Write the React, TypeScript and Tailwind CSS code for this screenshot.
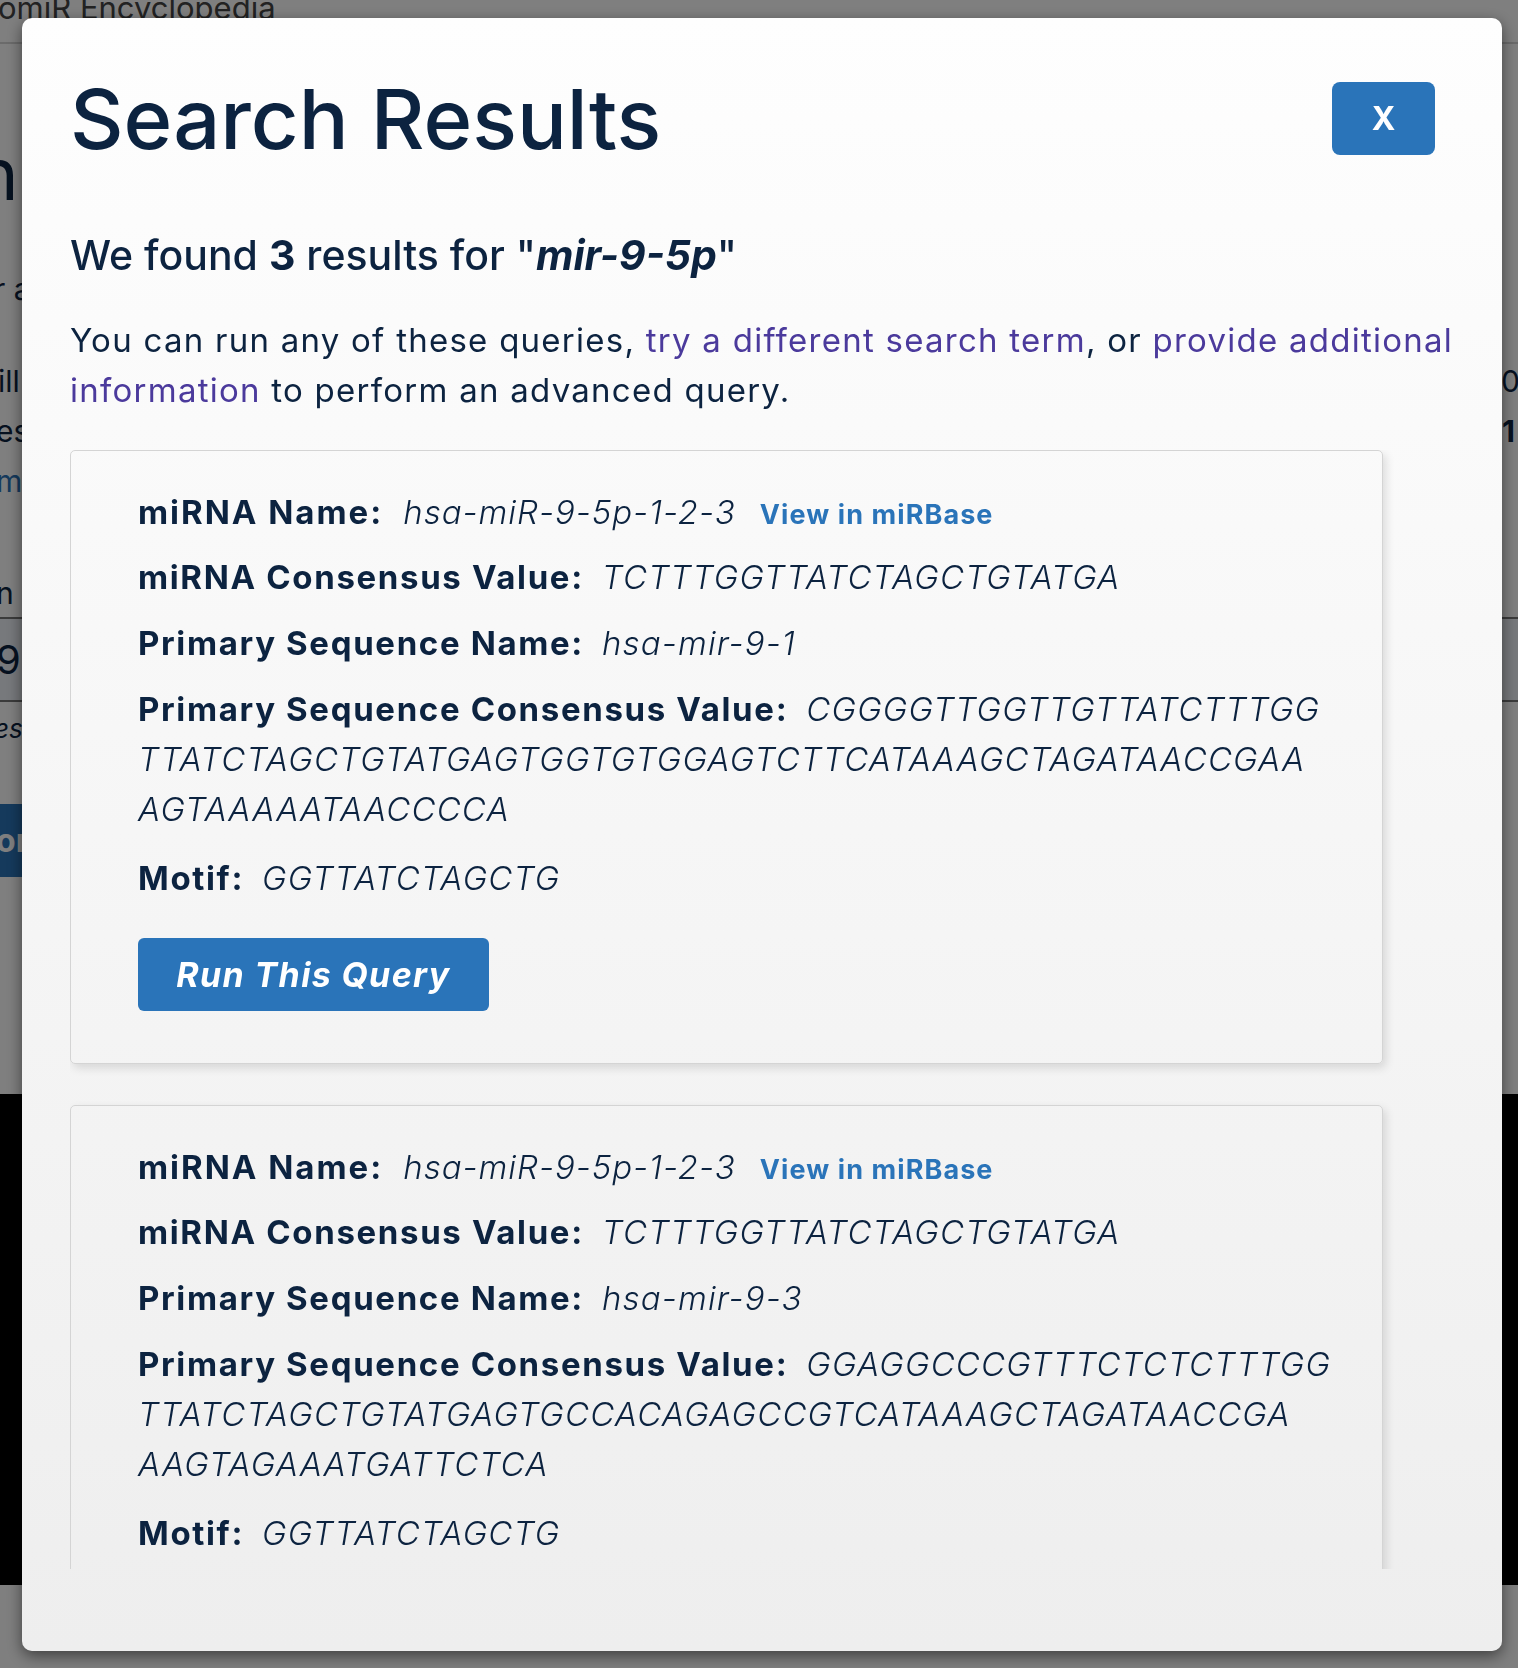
import { Fragment } from "react";

type Result = {
  name: string;
  consensus: string;
  primaryName: string;
  primaryConsensus: string[];
  motif: string;
};

const results: Result[] = [
  {
    name: "hsa-miR-9-5p-1-2-3",
    consensus: "TCTTTGGTTATCTAGCTGTATGA",
    primaryName: "hsa-mir-9-1",
    primaryConsensus: [
      "CGGGGTTGGTTGTTATCTTTGG",
      "TTATCTAGCTGTATGAGTGGTGTGGAGTCTTCATAAAGCTAGATAACCGAA",
      "AGTAAAAATAACCCCA",
    ],
    motif: "GGTTATCTAGCTG",
  },
  {
    name: "hsa-miR-9-5p-1-2-3",
    consensus: "TCTTTGGTTATCTAGCTGTATGA",
    primaryName: "hsa-mir-9-3",
    primaryConsensus: [
      "GGAGGCCCGTTTCTCTCTTTGG",
      "TTATCTAGCTGTATGAGTGCCACAGAGCCGTCATAAAGCTAGATAACCGA",
      "AAGTAGAAATGATTCTCA",
    ],
    motif: "GGTTATCTAGCTG",
  },
  {
    name: "hsa-miR-9-5p-1-2-3",
    consensus: "TCTTTGGTTATCTAGCTGTATGA",
    primaryName: "hsa-mir-9-2",
    primaryConsensus: [
      "GGAAGCGAGTTGTTATCTTTGG",
      "TTATCTAGCTGTATGAGTGTATTGGTCTTCATAAAGCTAGATAACCGAA",
      "AGTAAAAACTCCTTCA",
    ],
    motif: "GGTTATCTAGCTG",
  },
];

function Field({
  label,
  children,
  className = "mb-4",
}: {
  label: string;
  children: React.ReactNode;
  className?: string;
}) {
  return (
    <p className={`${className} whitespace-nowrap text-[33px] leading-[50px]`}>
      <span className="font-bold tracking-[0.05em]">{label}:</span>
      <span className="ml-[18px] italic font-light tracking-[0.035em]">{children}</span>
    </p>
  );
}

function ResultCard({ result }: { result: Result }) {
  return (
    <article className="mb-[41px] w-[1313px] rounded-[5px] border-[1.5px] border-[#d4d4d4] px-[67px] pt-[36px] pb-[52px] shadow-[3px_4px_10px_rgba(0,0,0,0.12)]">
      <p className="mb-[12px] whitespace-nowrap text-[33px] leading-[50px]">
        <span className="font-bold tracking-[0.06em]">miRNA Name:</span>
        <span className="ml-5 italic font-light tracking-[0.03em]">{result.name}</span>
        <a href="#" className="ml-6 text-[27px] font-bold tracking-[0.04em] text-[#2a74b9]">
          View in miRBase
        </a>
      </p>
      <Field label="miRNA Consensus Value">{result.consensus}</Field>
      <Field label="Primary Sequence Name">{result.primaryName}</Field>
      <Field label="Primary Sequence Consensus Value" className="mb-[19px]">
        {result.primaryConsensus.map((line, i) => (
          <Fragment key={line}>
            {i > 0 && <br />}
            {line}
          </Fragment>
        ))}
      </Field>
      <Field label="Motif">{result.motif}</Field>
      <button className="mt-[19px] h-[73px] w-[351px] rounded-[6px] bg-[#2a74b9] text-[34px] font-bold italic tracking-[0.04em] text-white">
        Run This Query
      </button>
    </article>
  );
}

function BackgroundPage() {
  return (
    <div className="min-h-[1668px] bg-white text-[#0c2340]">
      <header className="h-[44px] overflow-hidden border-b-2 border-[#d6d6d6]">
        <p className="-mt-[12px] -ml-[2px] whitespace-nowrap text-[31px] leading-[40px] text-[#444]">omiR Encyclopedia</p>
      </header>
      <div className="flex h-[1050px] flex-col overflow-hidden">
        <div className="mt-[100px] h-[60px]">
          <span className="-ml-[24px] text-[72px] leading-[60px]">n</span>
        </div>
        <div className="mt-[60px] text-[30px] leading-[50px]">
          <span className="-ml-[6px] whitespace-pre">r a</span>
        </div>
        <div className="mt-[42px] flex justify-between text-[30px] leading-[50px]">
          <span className="-ml-[2px]">ill</span>
          <span className="-mr-[2px]">0</span>
        </div>
        <div className="flex justify-between text-[30px] leading-[50px]">
          <span className="-ml-[4px]">es</span>
          <span className="mr-[3px] font-bold">1</span>
        </div>
        <div className="text-[30px] leading-[50px] text-[#2a74b9]">
          <span className="-ml-[4px]">m</span>
        </div>
        <div className="mt-[62px] text-[30px] leading-[50px]">
          <span className="-ml-[4px]">n</span>
        </div>
        <div className="-mt-px flex h-[85px] items-center border-y-2 border-[#777] bg-[#eef2f8] text-[40px]">
          <span className="-ml-[4px]">9-5p</span>
        </div>
        <div className="mt-[3px] text-[26px] italic leading-[48px]">
          <span className="-ml-[6px]">es</span>
        </div>
        <div className="mt-[51px] flex h-[73px] w-[200px] items-center bg-[#2a74b9] text-[32px] font-bold text-white">
          <span className="-ml-[4px]">on</span>
        </div>
      </div>
      <footer className="h-[491px] bg-black" />
    </div>
  );
}

export default function App() {
  return (
    <div className="relative min-h-[1668px] w-full overflow-hidden font-['Inter',sans-serif]">
      <BackgroundPage />
      <div className="fixed inset-0 bg-black/50" />
      <div className="fixed inset-0 pt-[18px] pr-[16px] pb-[17px] pl-[22px]">
        <div className="flex h-full flex-col rounded-[10px] bg-gradient-to-b from-[#fefefe] to-[#eeeeee] pr-[48px] pb-[82px] pl-[48px] text-[#0c2340] shadow-[0_5px_15px_rgba(0,0,0,0.5)]">
          <div className="flex items-start justify-between">
            <h1 className="mt-[46px] text-[83px] font-medium leading-[110px]">Search Results</h1>
            <button className="mt-[64px] mr-[19px] h-[73px] w-[103px] rounded-[8px] bg-[#2a74b9] text-[32px] font-bold text-white">
              X
            </button>
          </div>
          <h2 className="mt-[56px] text-[41px] font-medium leading-[50px]">
            We found <strong className="font-bold">3</strong> results for "
            <strong className="font-bold italic">mir-9-5p</strong>"
          </h2>
          <p className="mt-[35px] text-[33px] leading-[50px] tracking-[0.038em]">
            You can run any of these queries,{" "}
            <a href="#" className="text-[#4b3a9c]">try a different search term</a>, or{" "}
            <a href="#" className="text-[#4b3a9c]">provide additional information</a> to perform an advanced query.
          </p>
          <div className="mt-[35px] min-h-0 flex-1 overflow-hidden">
            {results.map((result, i) => (
              <ResultCard key={i} result={result} />
            ))}
          </div>
        </div>
      </div>
    </div>
  );
}
